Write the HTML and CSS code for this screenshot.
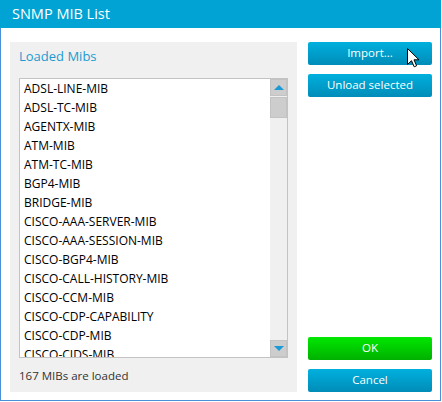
FILE: index.html
```html
<!DOCTYPE html>
<html>
<head>
<meta charset="utf-8">
<link rel="stylesheet" href="styles.css">
</head>
<body>
<div class="window">
  <div class="titlebar">SNMP MIB List</div>
  <div class="content">
    <div class="panel">
      <div class="panel-title">Loaded Mibs</div>
      <div class="listbox">
        <ul class="items">
          <li>ADSL-LINE-MIB</li>
          <li>ADSL-TC-MIB</li>
          <li>AGENTX-MIB</li>
          <li>ATM-MIB</li>
          <li>ATM-TC-MIB</li>
          <li>BGP4-MIB</li>
          <li>BRIDGE-MIB</li>
          <li>CISCO-AAA-SERVER-MIB</li>
          <li>CISCO-AAA-SESSION-MIB</li>
          <li>CISCO-BGP4-MIB</li>
          <li>CISCO-CALL-HISTORY-MIB</li>
          <li>CISCO-CCM-MIB</li>
          <li>CISCO-CDP-CAPABILITY</li>
          <li>CISCO-CDP-MIB</li>
          <li>CISCO-CIDS-MIB</li>
        </ul>
        <div class="scrollbar">
          <div class="sb-btn"><span class="arrow-up"></span></div>
          <div class="sb-track"><div class="sb-thumb"></div></div>
          <div class="sb-btn"><span class="arrow-down"></span></div>
        </div>
      </div>
      <div class="status">167 MIBs are loaded</div>
    </div>
    <div class="side">
      <div class="btn blue">Import...</div>
      <div class="btn blue">Unload selected</div>
      <div class="spacer"></div>
      <div class="btn green">OK</div>
      <div class="btn blue">Cancel</div>
    </div>
  </div>
  <svg class="cursor" width="13" height="20" viewBox="0 0 13 20">
    <path d="M0.5 0.5 L0.5 16.5 L4.5 12.7 L7.2 18.8 L9.6 17.8 L7 11.8 L12 11.8 Z" fill="#fff" stroke="#000" stroke-width="1" stroke-linejoin="miter"/>
  </svg>
</div>
</body>
</html>
```
FILE: styles.css
```css
* { box-sizing: border-box; }
html, body { margin: 0; padding: 0; background: #fff; }
body { font-family: "Open Sans", "Noto Sans", sans-serif; }
.window {
  position: relative;
  width: 441px;
  height: 401px;
  border: 1px solid #4a90d9;
  border-top: none;
  display: flex;
  flex-direction: column;
  background: #fff;
}
.titlebar {
  height: 28px;
  margin: 0 -1px;
  background: #00a3d3;
  color: #fff;
  font-size: 14.5px;
  line-height: 27px;
  padding-left: 12px;
}
.content {
  flex: 1;
  display: flex;
  padding: 14px 7px 8px 9px;
  gap: 11px;
}
.panel {
  width: 287px;
  background: #f0f0f0;
  padding: 0 9px;
  display: flex;
  flex-direction: column;
}
.panel-title {
  color: #1b9bd1;
  font-size: 13px;
  height: 36px;
  line-height: 28px;
}
.listbox {
  height: 280px;
  border: 1px solid #c3c3c3;
  background: #fff;
  display: flex;
  overflow: hidden;
}
.items {
  list-style: none;
  margin: 0;
  padding: 0;
  flex: 1;
  overflow: hidden;
}
.items li {
  height: 19px;
  line-height: 19px;
  padding-left: 4px;
  font-size: 12px;
  color: #000;
  white-space: nowrap;
}
.scrollbar {
  width: 17px;
  display: flex;
  flex-direction: column;
  background: #f0f0f0;
}
.sb-btn {
  height: 17px;
  background: #cdcdcd;
  border: 1px solid #c3c3c3;
  display: flex;
  align-items: center;
  justify-content: center;
}
.sb-track { flex: 1; padding-top: 1px; }
.sb-thumb {
  height: 21px;
  background: #cdcdcd;
  border: 1px solid #c3c3c3;
}
.arrow-up, .arrow-down {
  width: 0; height: 0;
  border-left: 5px solid transparent;
  border-right: 5px solid transparent;
}
.arrow-up { border-bottom: 5px solid #1a9ad6; }
.arrow-down { border-top: 5px solid #1a9ad6; }
.status {
  color: #333;
  font-size: 11.5px;
  padding-top: 3px;
  height: 33px;
  line-height: 30px;
}
.side {
  flex: 1;
  display: flex;
  flex-direction: column;
  gap: 9px;
  padding-right: 1px;
}
.spacer { flex: 1; }
.btn {
  height: 23px;
  border-radius: 2px;
  color: #fff;
  font-size: 11.5px;
  text-align: center;
  line-height: 22px;
}
.blue { background: linear-gradient(#00b0de, #008cb8); }
.green { background: linear-gradient(#00e800, #00b000); }
.cursor { position: absolute; left: 406px; top: 48px; }
```
